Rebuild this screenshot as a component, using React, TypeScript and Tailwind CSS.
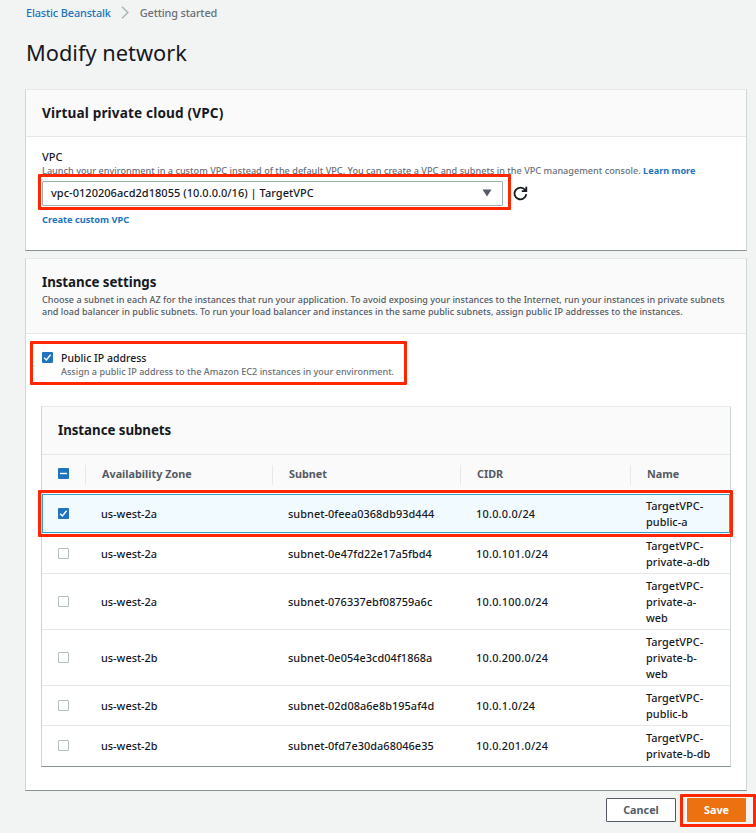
import React from 'react';

type Row = { zone: string; subnet: string; cidr: string; name: string[]; selected?: boolean };

const rows: Row[] = [
  { zone: 'us-west-2a', subnet: 'subnet-0feea0368db93d444', cidr: '10.0.0.0/24', name: ['TargetVPC-', 'public-a'], selected: true },
  { zone: 'us-west-2a', subnet: 'subnet-0e47fd22e17a5fbd4', cidr: '10.0.101.0/24', name: ['TargetVPC-', 'private-a-db'] },
  { zone: 'us-west-2a', subnet: 'subnet-076337ebf08759a6c', cidr: '10.0.100.0/24', name: ['TargetVPC-', 'private-a-', 'web'] },
  { zone: 'us-west-2b', subnet: 'subnet-0e054e3cd04f1868a', cidr: '10.0.200.0/24', name: ['TargetVPC-', 'private-b-', 'web'] },
  { zone: 'us-west-2b', subnet: 'subnet-02d08a6e8b195af4d', cidr: '10.0.1.0/24', name: ['TargetVPC-', 'public-b'] },
  { zone: 'us-west-2b', subnet: 'subnet-0fd7e30da68046e35', cidr: '10.0.201.0/24', name: ['TargetVPC-', 'private-b-db'] },
];

const grid = 'grid grid-cols-[43px_187px_188px_170px_1fr]';

function Checkbox({ state }: { state: 'on' | 'off' | 'mixed' }) {
  if (state === 'off') {
    return <span className="block size-[11px] shrink-0 rounded-[1px] border border-[#b3bfbf] bg-white" />;
  }
  return (
    <span className="block size-[11px] shrink-0 rounded-[1px] bg-[#2074be]">
      <svg viewBox="0 0 11 11" className="block size-[11px]" fill="none" stroke="#fff" strokeWidth="1.4">
        {state === 'on' ? <path d="M2.2 5.7 4.4 8 8.6 2.8" /> : <path d="M2 5.5h7" />}
      </svg>
    </span>
  );
}

function Highlight({ className }: { className: string }) {
  return <div className={`pointer-events-none absolute z-10 rounded-[1px] border-3 border-[#ff2600] ${className}`} />;
}

const card = 'border border-t-[#e6e9e9] border-x-[#cfd6d6] border-b-[#879596] bg-white';

export default function App() {
  return (
    <div className="h-[833px] w-[756px] overflow-hidden bg-[#f2f3f3] pl-[25px] font-['Noto_Sans',sans-serif] text-[#16191f]">
      <nav className="flex h-[27px] items-center pl-[1px] text-[10.9px] font-medium tracking-[-0.13px]">
        <a className="text-[#2074be]">Elastic Beanstalk</a>
        <svg viewBox="0 0 8 13" className="-mt-[2px] mr-[10.5px] ml-[10.5px] h-[13px] w-[8px]" fill="none" stroke="#aab7b8" strokeWidth="1.5">
          <path d="M1 .8 6.8 6.5 1 12.2" />
        </svg>
        <span className="text-[#687078]">Getting started</span>
      </nav>
      <h1 className="flex h-[62px] items-start pt-[11px] pl-[1px] text-[21.8px] leading-[30px]">Modify network</h1>

      <section className={`h-[162px] w-[722px] ${card}`}>
        <header className="flex h-[47px] items-center border-b border-[#e6e9e9] bg-[#fafafa] pl-[16px] text-[13.6px] font-bold tracking-[0.15px]">
          Virtual private cloud (VPC)
        </header>
        <div className="pt-[12px] pl-[16px]">
          <div className="text-[11px] leading-[16px] font-medium">VPC</div>
          <p className="h-[16px] whitespace-nowrap text-[9.1px] leading-[12px] font-medium tracking-[0.02px] text-[#687078]">
            Launch your environment in a custom VPC instead of the default VPC. You can create a VPC and subnets in the VPC management console.{' '}
            <a className="font-bold text-[#2074be]">Learn more</a>
          </p>
          <div className="flex items-center">
            <div className="relative flex h-[25px] w-[461px] items-center justify-between rounded-[1px] border border-[#a0b0b0] pr-[10px] pb-[1px] pl-[8px]">
              <span className="text-[11px] font-medium tracking-[0.03px]">vpc-0120206acd2d18055 (10.0.0.0/16) | TargetVPC</span>
              <svg viewBox="0 0 10 8" className="h-[8px] w-[10px]"><path d="M.5.5h9L5 7.5Z" fill="#545b64" /></svg>
              <Highlight className="-top-[8px] -left-[5px] h-[36px] w-[473px]" />
            </div>
            <svg viewBox="0 0 15 15" className="ml-[10px] size-[15px]" fill="none" stroke="#16191f" strokeWidth="1.8">
              <path d="M13.3 8.2A5.9 5.9 0 1 1 12.2 4M13.3.8V5.1H8.8" />
            </svg>
          </div>
          <a className="mt-[7px] block text-[9.25px] leading-[14px] font-bold text-[#2074be]">Create custom VPC</a>
        </div>
      </section>

      <section className={`mt-[7px] h-[533px] w-[722px] ${card}`}>
        <header className="h-[75px] border-b border-[#e6e9e9] bg-[#fafafa] pt-[13px] pl-[16px]">
          <h2 className="mb-[2px] text-[13.3px] leading-[20px] font-bold tracking-[-0.04px]">Instance settings</h2>
          <p className="whitespace-nowrap text-[9.05px] leading-[12px] font-medium text-[#545b64]">
            Choose a subnet in each AZ for the instances that run your application. To avoid exposing your instances to the Internet, run your instances in private subnets
            <br />
            and load balancer in public subnets. To run your load balancer and instances in the same public subnets, assign public IP addresses to the instances.
          </p>
        </header>

        <div className="relative flex h-[72px] gap-[8px] pt-[18px] pl-[16px]">
          <Highlight className="top-[7px] left-[4px] h-[44px] w-[377px]" />
          <Checkbox state="on" />
          <div className="-mt-[2px]">
            <div className="text-[10.5px] leading-[16px] font-medium">Public IP address</div>
            <p className="whitespace-nowrap text-[9.05px] leading-[12px] font-medium tracking-[0.01px] text-[#687078]">
              Assign a public IP address to the Amazon EC2 instances in your environment.
            </p>
          </div>
        </div>

        <div className={`ml-[15px] h-[361px] w-[690px] ${card}`}>
          <h2 className="flex h-[48px] items-center border-b border-[#e6e9e9] bg-[#fafafa] pl-[16px] text-[13.3px] font-bold tracking-[-0.04px]">Instance subnets</h2>
          <div className={`${grid} h-[39px] items-center bg-[#fafafa] text-[10.8px] font-bold text-[#545b64]`}>
            <div className="-mt-[2px] pl-[16px]"><Checkbox state="mixed" /></div>
            {['Availability Zone', 'Subnet', 'CIDR', 'Name'].map((h) => (
              <div key={h} className="flex h-[20px] items-center border-l border-[#e6e9e9] pl-[16px]">{h}</div>
            ))}
          </div>
          {rows.map((r) => (
            <div
              key={r.subnet}
              className={`${grid} relative items-center border-b py-[3.5px] text-[10.9px] leading-[16px] font-medium ${
                r.selected ? 'border-transparent bg-[#f1faff] ring-1 ring-[#37a0c8] ring-inset' : 'border-[#e6e9e9] last:border-b-0'
              }`}
            >
              {r.selected && <Highlight className="-top-[4px] -left-[4px] h-[47px] w-[695px]" />}
              <div className="-mt-[1px] pl-[16px]"><Checkbox state={r.selected ? 'on' : 'off'} /></div>
              <div className="pl-[16px]">{r.zone}</div>
              <div className="pl-[16px] tracking-[0.06px]">{r.subnet}</div>
              <div className="pl-[16px] tracking-[0.24px]">{r.cidr}</div>
              <div className="pl-[16px] tracking-[0.03px]">{r.name.map((n) => <div key={n}>{n}</div>)}</div>
            </div>
          ))}
        </div>
      </section>

      <footer className="flex gap-[11px] pt-[7px] pl-[581px] text-[10.8px] font-bold">
        <button className="h-[24px] w-[70px] rounded-[1px] border border-[#545b64] bg-white text-[#545b64]">Cancel</button>
        <button className="relative h-[24px] w-[59px] rounded-[1px] bg-[#ec7211] text-white">
          Save
          <Highlight className="-top-[4px] -left-[7.5px] h-[33px] w-[76px]" />
        </button>
      </footer>
    </div>
  );
}
